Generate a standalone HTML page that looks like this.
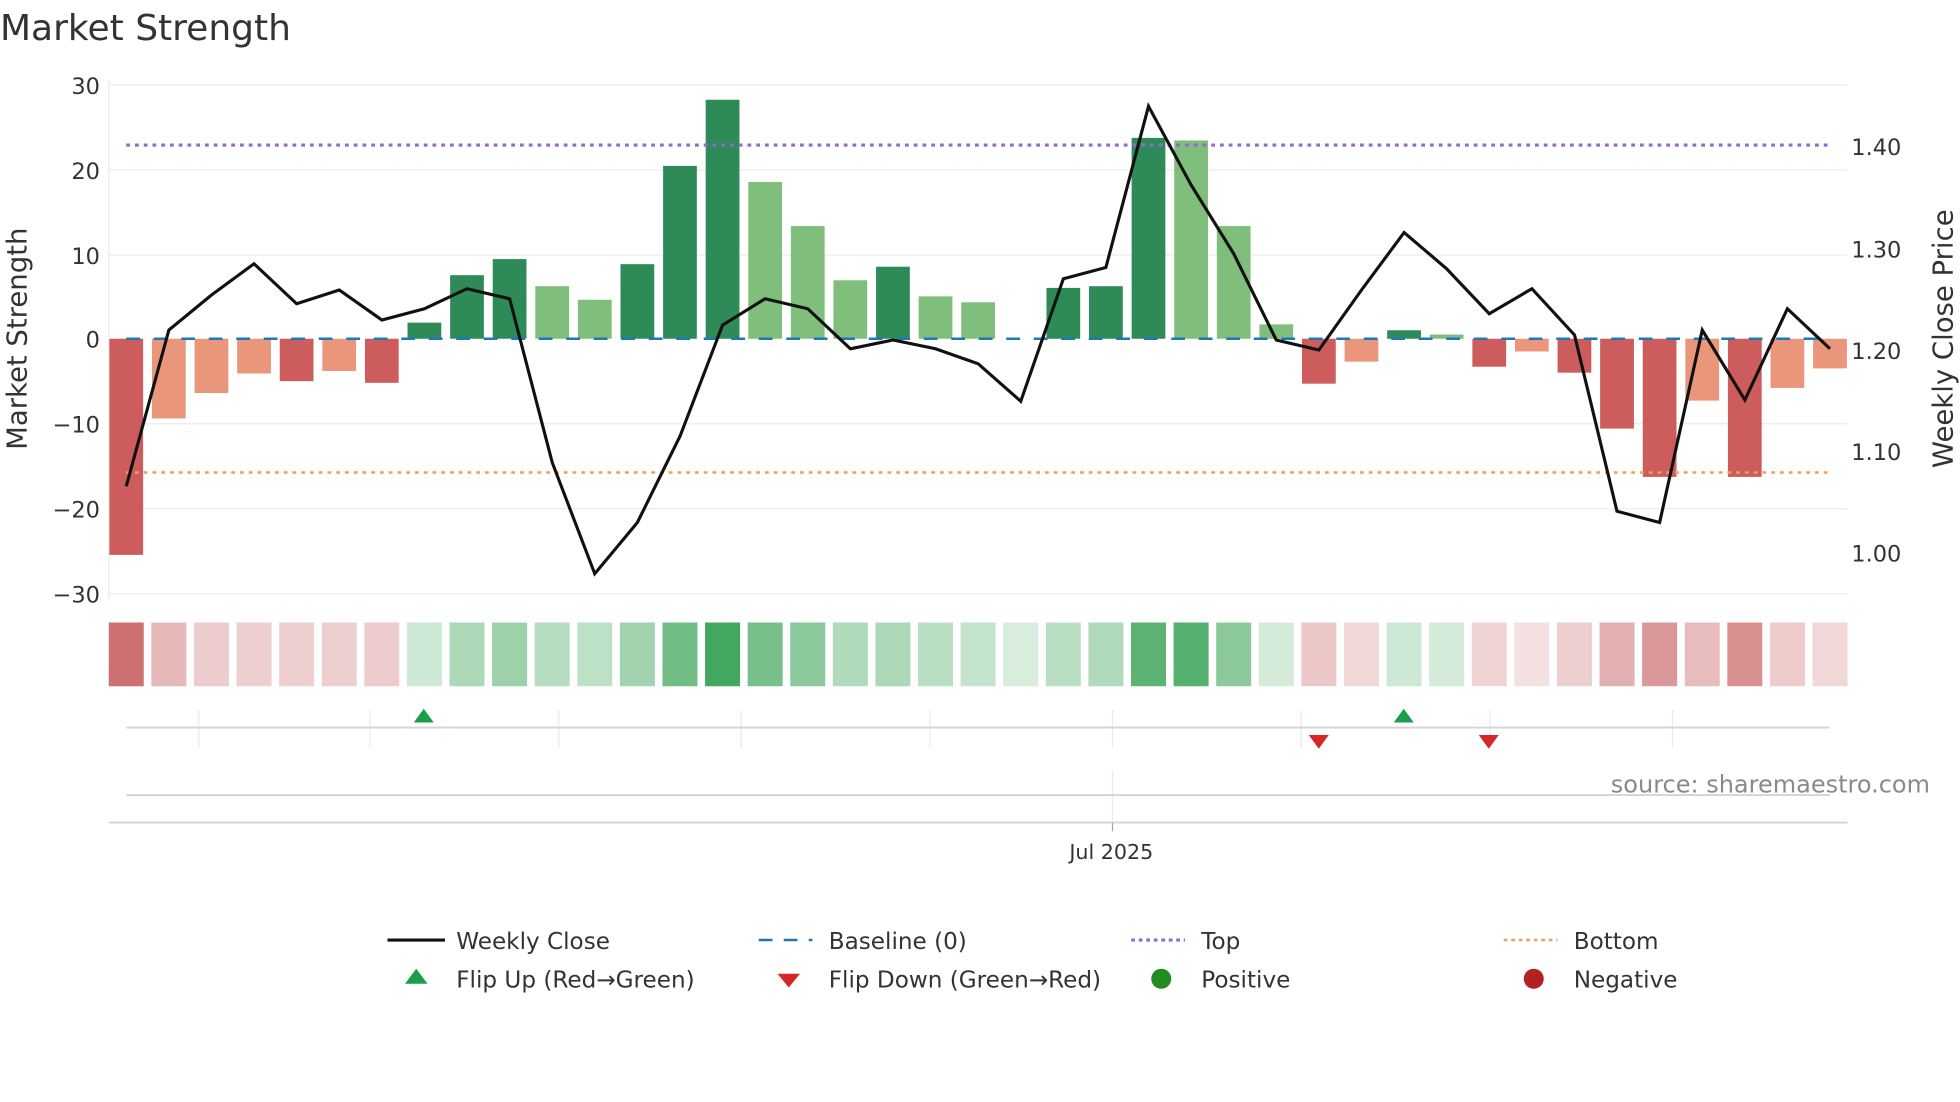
<!DOCTYPE html>
<html><head><meta charset="utf-8"><style>
html,body{margin:0;padding:0;background:#fff;width:1960px;height:1102px;overflow:hidden}
svg{display:block;font-family:"DejaVu Sans","Liberation Sans",sans-serif}
</style></head><body>
<svg id="s" width="1960" height="1102" viewBox="0 0 1568 881.6" xmlns="http://www.w3.org/2000/svg">
<text x="0" y="32" font-size="28.8" fill="#333">Market Strength</text>
<g stroke="#ececec" stroke-width="1">
<line x1="87" x2="1478" y1="68" y2="68"/><line x1="87" x2="1478" y1="136" y2="136"/><line x1="87" x2="1478" y1="204" y2="204"/><line x1="87" x2="1478" y1="339" y2="339"/><line x1="87" x2="1478" y1="407" y2="407"/><line x1="87" x2="1478" y1="475" y2="475"/>
<line x1="87" x2="87" y1="64" y2="480"/>
</g>
<g font-size="18" fill="#333" text-anchor="end">
<text x="80" y="75">30</text><text x="80" y="143">20</text><text x="80" y="211">10</text><text x="80" y="278">0</text><text x="80" y="346">−10</text><text x="80" y="414">−20</text><text x="80" y="482">−30</text>
</g>
<g font-size="18" fill="#333">
<text x="1481" y="124">1.40</text><text x="1481" y="206">1.30</text><text x="1481" y="287">1.20</text><text x="1481" y="368">1.10</text><text x="1481" y="449">1.00</text>
</g>
<text transform="translate(21,271) rotate(-90)" font-size="22" fill="#333" text-anchor="middle">Market Strength</text>
<text transform="translate(1562,271) rotate(-90)" font-size="22" fill="#333" text-anchor="middle">Weekly Close Price</text>
<g id="bars"></g>
<line x1="101" x2="1464" y1="271" y2="271" stroke="#1f77b4" stroke-width="2" stroke-dasharray="11,11"/>
<line x1="101" x2="1464" y1="116" y2="116" stroke="#9467d6" stroke-width="2.5" stroke-dasharray="3,4"/>
<line x1="101" x2="1464" y1="378" y2="378" stroke="#f0a050" stroke-width="2" stroke-dasharray="3,4"/>
<polyline id="pl" fill="none" stroke="#111" stroke-width="2.5" stroke-linejoin="miter"/>
<g id="strip"></g>
<g stroke="#eaeaee" stroke-width="1">
<line x1="159" x2="159" y1="568" y2="598"/><line x1="296" x2="296" y1="568" y2="598"/><line x1="447" x2="447" y1="568" y2="598"/><line x1="593" x2="593" y1="568" y2="598"/><line x1="744" x2="744" y1="568" y2="598"/><line x1="890" x2="890" y1="568" y2="598"/><line x1="1041" x2="1041" y1="568" y2="598"/><line x1="1192" x2="1192" y1="568" y2="598"/><line x1="1338" x2="1338" y1="568" y2="598"/>
<line x1="890" x2="890" y1="617" y2="660"/>
</g>
<line x1="101" x2="1464" y1="582" y2="582" stroke="#d4d4d8" stroke-width="1.5"/>
<line x1="101" x2="1464" y1="636" y2="636" stroke="#d4d4d8" stroke-width="1.5"/>
<line x1="87" x2="1478" y1="658" y2="658" stroke="#d4d4d8" stroke-width="1.5"/>
<line x1="890" x2="890" y1="658" y2="665" stroke="#aaa" stroke-width="1"/>
<polygon points="339,567 331,578 347,578" fill="#1a9e4a"/>
<polygon points="1123,567 1115,578 1131,578" fill="#1a9e4a"/>
<polygon points="1055,599 1047,588 1063,588" fill="#d62728"/>
<polygon points="1191,599 1183,588 1199,588" fill="#d62728"/>
<text x="1544" y="634" font-size="19.2" fill="#8a8a8a" text-anchor="end">source: sharemaestro.com</text>
<text x="889" y="687" font-size="16.5" fill="#333" text-anchor="middle">Jul 2025</text>
<g font-size="18.5" fill="#333">
<line x1="310" x2="356" y1="752" y2="752" stroke="#111" stroke-width="2.5"/><text x="365" y="759">Weekly Close</text>
<line x1="607" x2="650" y1="752" y2="752" stroke="#1f77b4" stroke-width="2" stroke-dasharray="11,9"/><text x="663" y="759">Baseline (0)</text>
<line x1="905" x2="948" y1="752" y2="752" stroke="#9467d6" stroke-width="2.5" stroke-dasharray="3,3"/><text x="961" y="759">Top</text>
<line x1="1203" x2="1246" y1="752" y2="752" stroke="#f0a050" stroke-width="2" stroke-dasharray="3,3"/><text x="1259" y="759">Bottom</text>
<polygon points="333,775 324,787 342,787" fill="#1a9e4a"/><text x="365" y="790">Flip Up (Red→Green)</text>
<polygon points="631,790 622,779 640,779" fill="#d62728"/><text x="663" y="790">Flip Down (Green→Red)</text>
<circle cx="929" cy="783" r="8" fill="#228b22"/><text x="961" y="790">Positive</text>
<circle cx="1227" cy="783" r="8" fill="#b22222"/><text x="1259" y="790">Negative</text>
</g>
</svg>
<script>
var NS="http://www.w3.org/2000/svg";
var v=[-25.5,-9.4,-6.4,-4.1,-5,-3.8,-5.2,1.9,7.5,9.4,6.2,4.6,8.8,20.4,28.2,18.5,13.3,6.9,8.5,5,4.3,0,6,6.2,23.7,23.4,13.3,1.7,-5.3,-2.7,1,0.5,-3.3,-1.5,-4,-10.6,-16.3,-7.3,-16.3,-5.8,-3.5];
var c=["r","s","s","s","r","s","r","d","d","d","l","l","d","d","d","l","l","l","d","l","l","l","d","d","d","l","l","l","r","s","d","l","r","s","r","r","r","s","r","s","s"];
var col={r:"#cd5c5c",s:"#e9967a",d:"#2e8b57",l:"#7fbf7b"};
var p=[389,264,236,211,243,232,256,247,231,239,370,459,418,349,260,239,247,279,272,279,291,321,223,214,85,148,203,272,280,232,186,215,251,231,268,409,418,264,320,247,279];
var a=[0.9,0.45,0.32,0.3,0.3,0.3,0.32,0.25,0.42,0.5,0.38,0.33,0.48,0.72,0.95,0.68,0.58,0.4,0.42,0.35,0.3,0.2,0.35,0.4,0.82,0.85,0.58,0.22,0.35,0.25,0.25,0.22,0.27,0.2,0.3,0.5,0.65,0.42,0.7,0.33,0.25];
var bars=document.getElementById("bars"),strip=document.getElementById("strip"),pts=[];
for(var i=0;i<41;i++){var x=101+i*34.075;
 if(v[i]!=0){var r=document.createElementNS(NS,"rect");var h=Math.abs(v[i])*6.78;
 r.setAttribute("x",x-13.5);r.setAttribute("width",27);r.setAttribute("y",v[i]>0?271-h:271);r.setAttribute("height",h);r.setAttribute("fill",col[c[i]]);bars.appendChild(r);}
 var s=document.createElementNS(NS,"rect");s.setAttribute("x",x-14);s.setAttribute("width",28);s.setAttribute("y",498);s.setAttribute("height",51);
 s.setAttribute("fill",v[i]<0?"#c5585a":"#2e9e4c");s.setAttribute("fill-opacity",a[i]*0.95);strip.appendChild(s);
 pts.push(x.toFixed(1)+","+p[i]);}
document.getElementById("pl").setAttribute("points",pts.join(" "));
</script>
</body></html>
